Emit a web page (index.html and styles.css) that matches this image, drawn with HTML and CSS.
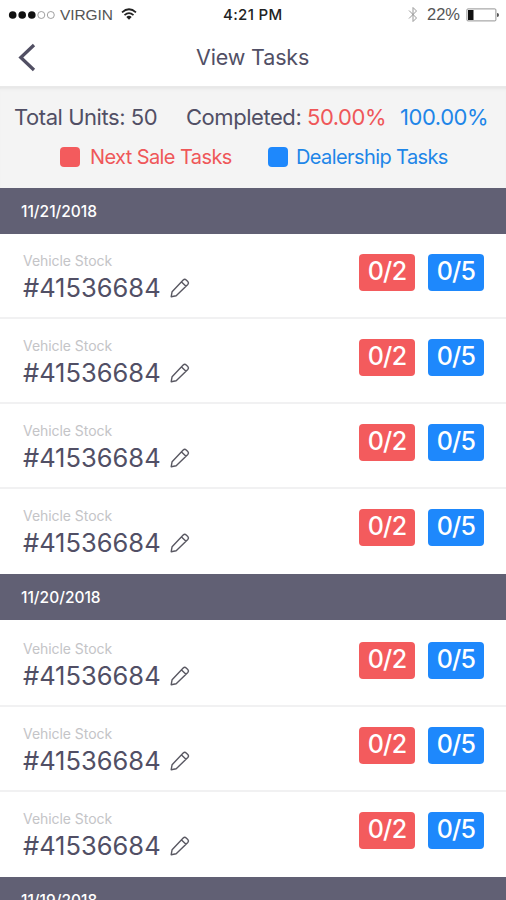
FILE: index.html
```
<!DOCTYPE html>
<html lang="en">
<head>
<meta charset="utf-8">
<title>View Tasks</title>
<link rel="stylesheet" href="styles.css">
</head>
<body>
<svg class="defs" width="0" height="0" aria-hidden="true">
  <symbol id="pencil" viewBox="0 0 22 22">
    <path d="M2.2 19.7 3.1 14.7 14.2 3.1Q15.7 1.6 17.2 3L18.8 4.5Q20.2 6 18.8 7.5L7.2 18.8ZM12.5 4.9 17 9.3" fill="none" stroke="currentColor" stroke-width="1.4" stroke-linejoin="round"/>
  </symbol>
</svg>
<div class="screen">
  <div class="status">
    <svg class="signal" width="48" height="10" viewBox="0 0 48 10">
      <g fill="#111"><circle cx="4.7" cy="5" r="3.8"/><circle cx="14.2" cy="5" r="3.8"/><circle cx="23.8" cy="5" r="3.8"/></g>
      <g fill="none" stroke="#888" stroke-width=".8"><circle cx="33.3" cy="5" r="3.5"/><circle cx="42.8" cy="5" r="3.5"/></g>
    </svg>
    <span class="carrier">VIRGIN</span>
    <svg class="wifi" width="16" height="12" viewBox="0 0 16 12">
      <g fill="none" stroke="#222" stroke-width="1.7"><path d="M1 4.4Q8-1.9 15 4.4"/><path d="M3.5 7.1Q8 3.1 12.5 7.1"/></g>
      <path d="M5.3 8.9Q8 6.7 10.7 8.9L8 11.7Z" fill="#222"/>
    </svg>
    <span class="time">4:21 PM</span>
    <svg class="bluetooth" width="10" height="17" viewBox="0 0 10 17"><path d="M1 4.5 8.5 12 5 15.5V1.5L8.5 5 1 12.5" fill="none" stroke="#999" stroke-width="1"/></svg>
    <span class="percent">22%</span>
    <svg class="battery" width="34" height="14" viewBox="0 0 34 14"><rect x=".9" y=".9" width="29" height="12" rx="1" fill="none" stroke="#888" stroke-width=".9"/><path d="M2 2H7.5V12H2Z" fill="#111"/><path d="M31 5Q33 5 33 7T31 9Z" fill="#555"/></svg>
  </div>
  <header class="nav">
    <svg class="back" width="20" height="30" viewBox="0 0 20 30"><path d="M17 2 3.8 14.5 17 27" fill="none" stroke="#514f63" stroke-width="3.3"/></svg>
    <h1>View Tasks</h1>
  </header>
  <section class="summary">
    <div class="totals"><span class="units">Total Units: 50</span><span class="completed">Completed:</span><span class="next">50.00%</span><span class="dealer">100.00%</span></div>
    <div class="legend"><i class="swatch red"></i><span class="next-label">Next Sale Tasks</span><i class="swatch blue"></i><span class="dealer-label">Dealership Tasks</span></div>
  </section>
  <h2>11/21/2018</h2>
  <ul>
    <li><div class="stock"><small>Vehicle Stock</small><b>#41536684</b><svg class="edit"><use href="#pencil"/></svg></div><span class="badge red">0/2</span><span class="badge blue">0/5</span></li>
    <li><div class="stock"><small>Vehicle Stock</small><b>#41536684</b><svg class="edit"><use href="#pencil"/></svg></div><span class="badge red">0/2</span><span class="badge blue">0/5</span></li>
    <li><div class="stock"><small>Vehicle Stock</small><b>#41536684</b><svg class="edit"><use href="#pencil"/></svg></div><span class="badge red">0/2</span><span class="badge blue">0/5</span></li>
    <li><div class="stock"><small>Vehicle Stock</small><b>#41536684</b><svg class="edit"><use href="#pencil"/></svg></div><span class="badge red">0/2</span><span class="badge blue">0/5</span></li>
  </ul>
  <h2>11/20/2018</h2>
  <ul class="later">
    <li><div class="stock"><small>Vehicle Stock</small><b>#41536684</b><svg class="edit"><use href="#pencil"/></svg></div><span class="badge red">0/2</span><span class="badge blue">0/5</span></li>
    <li><div class="stock"><small>Vehicle Stock</small><b>#41536684</b><svg class="edit"><use href="#pencil"/></svg></div><span class="badge red">0/2</span><span class="badge blue">0/5</span></li>
    <li><div class="stock"><small>Vehicle Stock</small><b>#41536684</b><svg class="edit"><use href="#pencil"/></svg></div><span class="badge red">0/2</span><span class="badge blue">0/5</span></li>
  </ul>
  <h2>11/19/2018</h2>
</div>
</body>
</html>
```

FILE: styles.css
```
* { box-sizing: border-box; margin: 0; padding: 0; }
body { background: #fff; color: #514f65; font-family: Inter, "Liberation Sans", sans-serif; }
.defs { display: block; }
.screen { height: 900px; overflow: hidden; }
span, b, small, h1, h2 { white-space: nowrap; }
svg { flex: none; }
.status { display: flex; align-items: center; height: 29px; padding-left: 8px; color: #555; font: 15.5px "Liberation Sans", sans-serif; }
.signal { width: 48px; }
.carrier { width: 57px; margin-left: 4px; letter-spacing: -.1px; }
.wifi { margin: -2px 0 0 4px; }
.time { width: 150px; margin-left: 86px; color: #222; font: 500 15px Inter, sans-serif; letter-spacing: .35px; }
.bluetooth { margin-left: 35px; }
.percent { width: 38px; margin-left: 9px; font-size: 16.5px; }
.battery { margin-left: 1px; }
.nav { display: flex; align-items: center; height: 58px; padding-left: 17px; border-bottom: 1px solid #e9e9e9; }
.nav h1 { margin: -1px 0 0 159px; font-size: 21.5px; font-weight: 400; letter-spacing: -.15px; }
.summary { height: 101px; padding-top: 15px; background: #f4f4f4; box-shadow: inset 0 4px 3px -2px #e6e6e6; }
.totals, .legend { display: flex; align-items: center; }
.totals { height: 30px; padding-left: 14px; font-size: 22px; letter-spacing: -.45px; }
.units { width: 172px; }
.completed { width: 121px; }
.next { width: 93px; }
.next, .next-label { color: #ef5759; }
.dealer, .dealer-label { color: #1e86e8; }
.legend { height: 50px; padding-left: 60px; font-size: 20px; letter-spacing: -.6px; }
.swatch { width: 20px; height: 20px; border-radius: 4px; }
.red { background: #f35b5d; }
.blue { background: #1e88fc; }
.next-label { width: 178px; margin-left: 10px; }
.dealer-label { margin-left: 8px; }
h2 { height: 46px; padding-left: 21px; background: #616074; color: #fff; font-size: 15.5px; font-weight: 500; line-height: 47px; }
ul { list-style: none; }
.later { padding-top: 2px; }
li { display: flex; height: 85px; padding: 18px 22px 0 23px; border-bottom: 2px solid #f1f1f2; }
li:last-child { border-color: transparent; }
.stock { display: grid; grid-template-columns: 146px 22px; grid-template-rows: 17px 36px; align-items: center; align-content: start; width: 336px; }
small { grid-column: 1 / 3; color: #c4c4c7; font-size: 14px; letter-spacing: -.05px; }
b { font-size: 25.5px; font-weight: 400; }
.edit { width: 22px; height: 22px; margin-top: 2px; color: #595862; }
.badge { width: 56px; height: 37px; margin-top: 2px; border-radius: 4px; color: #fff; font-size: 25px; font-weight: 500; line-height: 35px; text-align: center; letter-spacing: -.7px; }
.badge + .badge { margin-left: 13px; }
```
